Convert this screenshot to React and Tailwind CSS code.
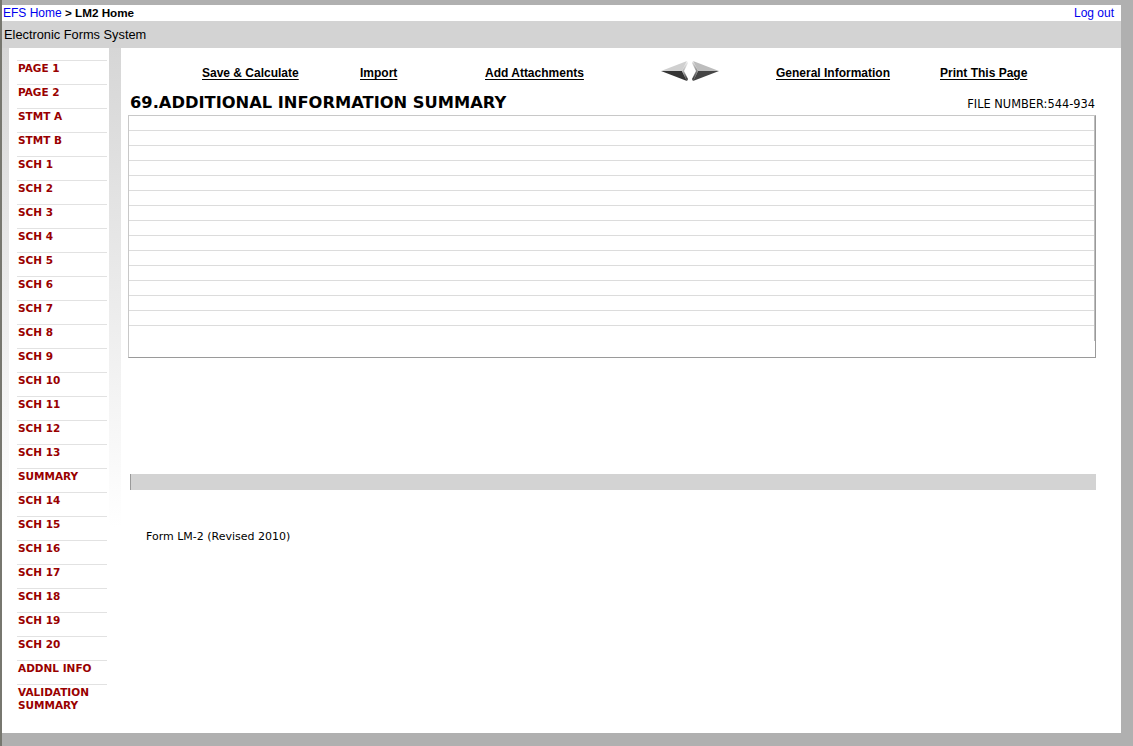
import React from 'react';

const navItems = [
  'PAGE 1', 'PAGE 2', 'STMT A', 'STMT B',
  'SCH 1', 'SCH 2', 'SCH 3', 'SCH 4', 'SCH 5', 'SCH 6', 'SCH 7', 'SCH 8', 'SCH 9',
  'SCH 10', 'SCH 11', 'SCH 12', 'SCH 13', 'SUMMARY',
  'SCH 14', 'SCH 15', 'SCH 16', 'SCH 17', 'SCH 18', 'SCH 19', 'SCH 20',
  'ADDNL INFO', 'VALIDATION SUMMARY',
];

const verdana = { fontFamily: '"DejaVu Sans", Verdana, sans-serif' };
const arial = { fontFamily: '"Liberation Sans", Arial, sans-serif' };

const Arrows = () => (
  <svg width="60" height="22" viewBox="0 0 60 22">
    <defs>
      <linearGradient id="lt" x1="0" y1="0" x2="0" y2="1">
        <stop offset="0" stopColor="#f4f4f4" />
        <stop offset="0.5" stopColor="#b8b8b8" />
        <stop offset="1" stopColor="#1e1e1e" />
      </linearGradient>
      <linearGradient id="rt" x1="0" y1="0" x2="0" y2="1">
        <stop offset="0" stopColor="#e8e8e8" />
        <stop offset="0.5" stopColor="#8a8a8a" />
        <stop offset="1" stopColor="#2a2a2a" />
      </linearGradient>
    </defs>
    {/* left arrow */}
    <path d="M1 11 L27 1 L22 11 Z" fill="#d0d0d0" />
    <path d="M1 11 L22 11 L27 21 Z" fill="#353535" />
    <path d="M22 11 L27 1 L28 3 L24 11 L28 19 L27 21 Z" fill="url(#lt)" />
    {/* right arrow */}
    <path d="M59 11 L33 1 L38 11 Z" fill="#bdbdbd" />
    <path d="M59 11 L38 11 L33 21 Z" fill="#454545" />
    <path d="M38 11 L33 1 L32 3 L36 11 L32 19 L33 21 Z" fill="url(#rt)" />
  </svg>
);

const ToolLink = ({ children }) => (
  <a href="#" className="font-bold text-[12px] text-black underline underline-offset-[2px] whitespace-nowrap" style={arial}>
    {children}
  </a>
);

export default function App() {
  return (
    <div className="min-h-screen bg-[#b0b0b0] pt-[5px] pr-[12px] pb-[13px] border-l-2 border-[#77776f]">
      {/* top breadcrumb */}
      <div className="bg-white h-[16px] flex items-center justify-between pl-[1px] pr-[7px] text-[12px]" style={arial}>
        <div>
          <a href="#" className="text-[#0000ee]">EFS Home</a>
          <span className="text-black font-bold text-[11.7px]"> &gt; LM2 Home</span>
        </div>
        <a href="#" className="text-[#0000ee]">Log out</a>
      </div>
      {/* system header */}
      <div className="bg-[#d3d3d3] h-[27px] flex items-center pl-[2px] text-[12.8px] text-black" style={arial}>
        Electronic Forms System
      </div>

      <div className="flex h-[685px] bg-[linear-gradient(to_bottom,#d6d6d6,#ffffff_70%)]">
        {/* sidebar */}
        <div className="ml-[7px] w-[100px] bg-white pt-[12px] pl-[8px] pr-[2px]" style={verdana}>
          {navItems.map((item) => (
            <div key={item} className="border-t border-[#e2e2e2] min-h-[24px] pt-[1px] pb-[9px]">
              <a href="#" className="block text-[10.5px] leading-[13px] font-bold text-[#990000] pl-[1px]">
                {item}
              </a>
            </div>
          ))}
        </div>

        {/* main */}
        <div className="ml-[12px] flex-1 bg-white">
          <div className="flex items-center h-[22px] mt-[12px] pl-[81px]">
            <div className="w-[158px]"><ToolLink>Save &amp; Calculate</ToolLink></div>
            <div className="w-[125px]"><ToolLink>Import</ToolLink></div>
            <div className="w-[175px]"><ToolLink>Add Attachments</ToolLink></div>
            <div className="w-[116px] flex items-center"><Arrows /></div>
            <div className="w-[164px]"><ToolLink>General Information</ToolLink></div>
            <div><ToolLink>Print This Page</ToolLink></div>
          </div>

          <div className="flex items-end justify-between mt-[10px] pl-[9px] pr-[26px]" style={verdana}>
            <h1 className="text-[16.3px] leading-[22px] font-bold text-black">69.ADDITIONAL INFORMATION SUMMARY</h1>
            <span className="text-[11.4px] leading-[20px] text-black">FILE NUMBER:544-934</span>
          </div>

          {/* text area */}
          <div className="ml-[7px] w-[968px] h-[243px] mt-[1px] border border-[#c8c8c8] border-r-[#9a9a9a] border-b-[#9a9a9a] flex">
            <div className="flex-1">
              {Array.from({ length: 14 }).map((_, i) => (
                <div key={i} className="h-[15px] border-b border-[#dcdcdc]" />
              ))}
            </div>
            <div className="w-[1px] h-[225px] bg-[#bdbdbd]" />
          </div>

          {/* gray bar */}
          <div className="ml-[9px] w-[966px] h-[16px] mt-[116px] bg-[#d3d3d3] border-l border-[#9a9a9a]" />

          <div className="pl-[25px] mt-[39px] text-[11px] text-black" style={verdana}>
            Form LM-2 (Revised 2010)
          </div>
        </div>
      </div>
    </div>
  );
}
